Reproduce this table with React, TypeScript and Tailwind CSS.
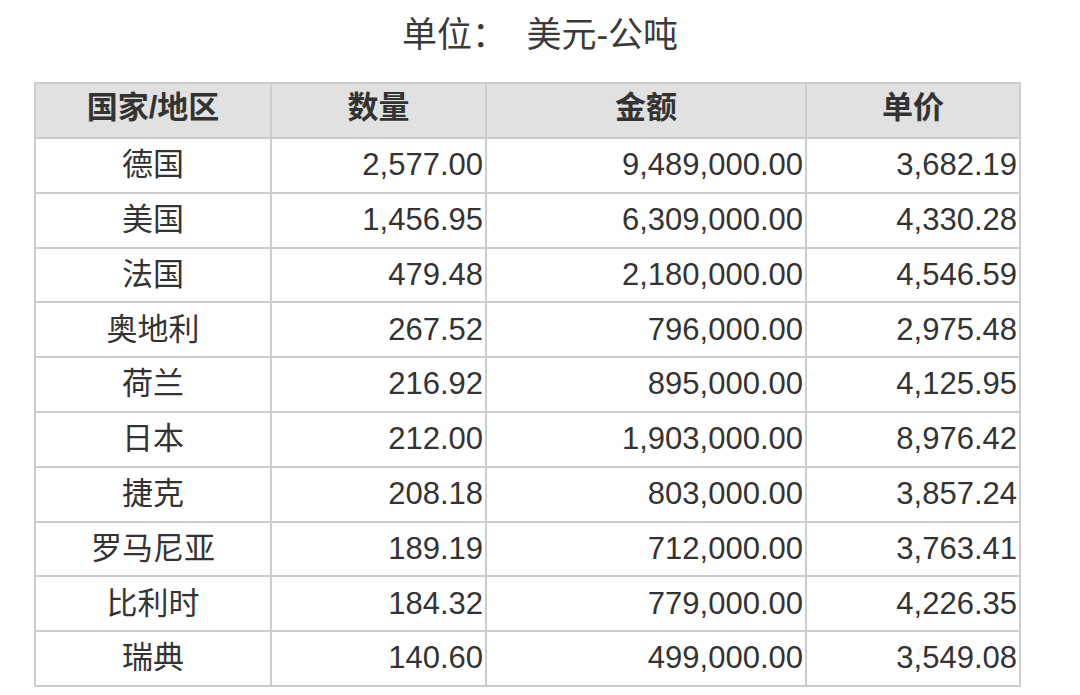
import React from "react";

const rows: [string, string, string, string][] = [
  ["德国", "2,577.00", "9,489,000.00", "3,682.19"],
  ["美国", "1,456.95", "6,309,000.00", "4,330.28"],
  ["法国", "479.48", "2,180,000.00", "4,546.59"],
  ["奥地利", "267.52", "796,000.00", "2,975.48"],
  ["荷兰", "216.92", "895,000.00", "4,125.95"],
  ["日本", "212.00", "1,903,000.00", "8,976.42"],
  ["捷克", "208.18", "803,000.00", "3,857.24"],
  ["罗马尼亚", "189.19", "712,000.00", "3,763.41"],
  ["比利时", "184.32", "779,000.00", "4,226.35"],
  ["瑞典", "140.60", "499,000.00", "3,549.08"],
];

export default function App() {
  return (
    <div
      className="w-[1080px] h-[695px] bg-white text-[#333] overflow-hidden"
      style={{ fontFamily: '"Liberation Sans", "Noto Sans CJK SC", sans-serif' }}
    >
      {/* 标题 */}
      <div className="h-[82px] flex justify-center pt-[11px]">
        <span className="text-[35px] leading-[48px] whitespace-pre text-[#3a3a3a]">单位：  美元-公吨</span>
      </div>

      <div className="pl-[34px]">
        <table className="border-collapse text-[31px]">
          <colgroup>
            <col className="w-[236px]" />
            <col className="w-[215px]" />
            <col className="w-[320px]" />
            <col className="w-[214px]" />
          </colgroup>
          <thead>
            <tr className="h-[55px] bg-[#e1e1e1]">
              {["国家/地区", "数量", "金额", "单价"].map((h) => (
                <th key={h} className="border-2 border-[#cdcdcd] font-bold text-center p-0 pb-[4px]">
                  {h}
                </th>
              ))}
            </tr>
          </thead>
          <tbody>
            {rows.map((r) => (
              <tr key={r[0]} className="h-[54.8px]">
                <td className="border-2 border-[#cdcdcd] text-center p-0">{r[0]}</td>
                <td className="border-2 border-[#cdcdcd] text-right p-0 pr-[2px]">{r[1]}</td>
                <td className="border-2 border-[#cdcdcd] text-right p-0 pr-[2px]">{r[2]}</td>
                <td className="border-2 border-[#cdcdcd] text-right p-0 pr-[2px]">{r[3]}</td>
              </tr>
            ))}
          </tbody>
        </table>
      </div>
    </div>
  );
}
